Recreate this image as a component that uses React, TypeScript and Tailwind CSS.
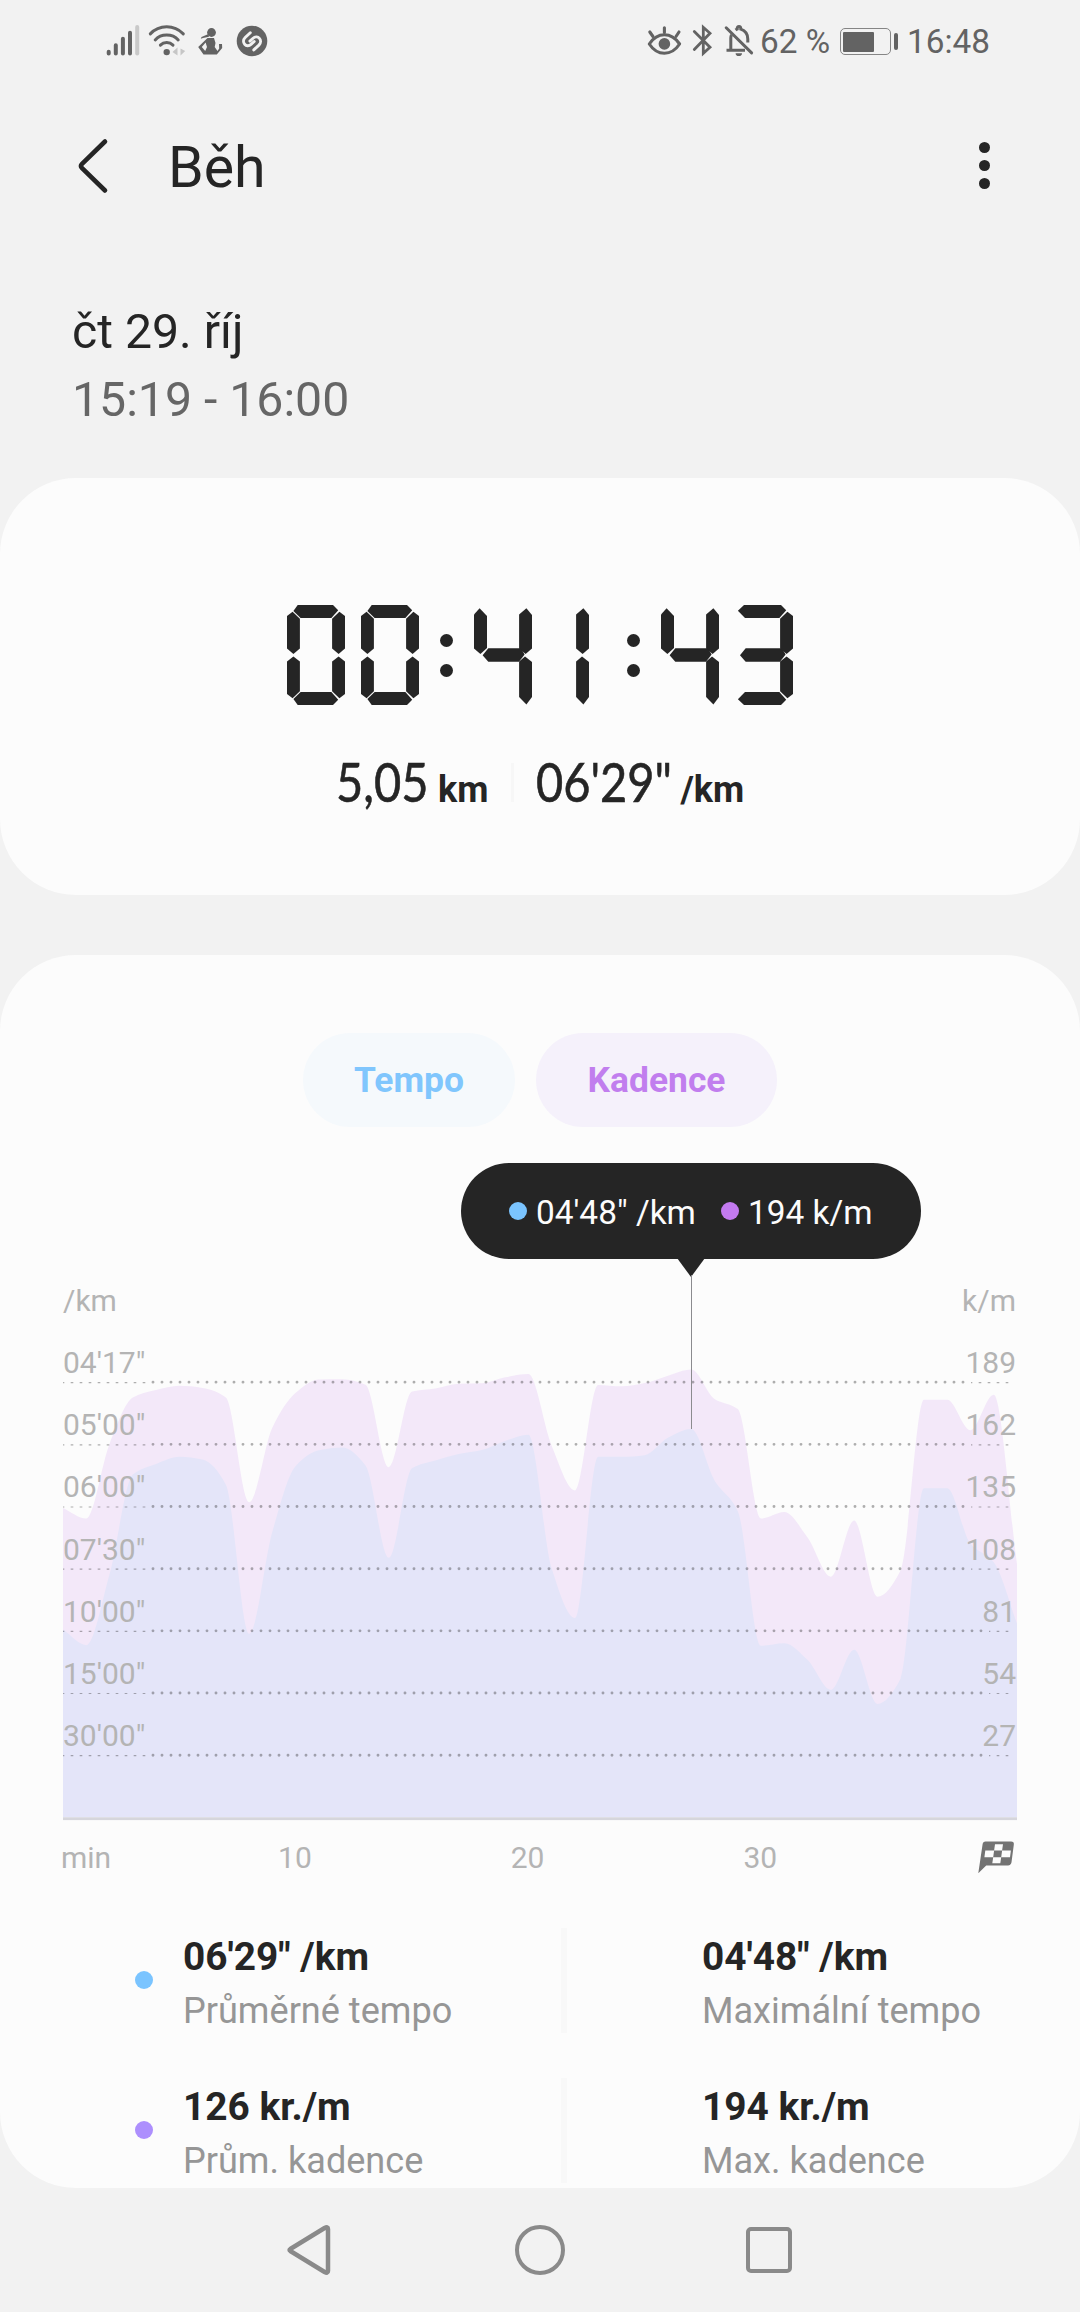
import React from "react";

const CADENCE = [
  134.4, 129.8, 162.2, 182.3, 185.6, 187.4, 186.5, 182.3, 136.9, 169.3, 184.4, 190.2, 190.3, 187.9,
  152.1, 184.9, 186.2, 188.3, 188.5, 191.1, 192.5, 161.4, 142, 187.8, 187.2, 188.6, 191.8, 194.5,
  181.7, 177.3, 129.8, 132.6, 121.5, 104.5, 128.9, 95.8, 107.3, 181.4, 181.4, 168.1, 183.5, 110,
];

const SPEED = [
  6.04, 5.54, 7.82, 11.03, 11.37, 11.6, 11.51, 10.7, 5.91, 9.2, 11.3, 11.81, 11.9, 11.32, 8.35,
  11.23, 11.48, 11.69, 11.82, 12.11, 12.31, 8.01, 6.41, 11.6, 11.6, 11.65, 12.21, 12.49, 10.84,
  9.85, 5.52, 5.6, 5.06, 4.1, 5.39, 3.65, 4.47, 10.59, 10.59, 8.8, 8.21, 6.24,
];

const PLOT_W = 954;
const ROW = 62.17;
const PLOT_H = 8 * ROW;

/** Area under a monotone cubic curve; `unit` is the value of one grid row. */
function areaPath(values: number[], unit: number): string {
  const n = values.length;
  const dx = PLOT_W / (n - 1);
  const ys = values.map((v) => PLOT_H - (v / unit) * ROW);
  const slopes: number[] = [];
  for (let i = 0; i < n - 1; i++) slopes.push((ys[i + 1] - ys[i]) / dx);
  const tangents = ys.map((_, i) => {
    if (i === 0) return slopes[0];
    if (i === n - 1) return slopes[n - 2];
    const a = slopes[i - 1];
    const b = slopes[i];
    return a * b <= 0 ? 0 : (2 * a * b) / (a + b);
  });
  let d = `M0 ${PLOT_H}L0 ${ys[0].toFixed(2)}`;
  for (let i = 0; i < n - 1; i++) {
    const x0 = i * dx;
    const x1 = x0 + dx;
    d += `C${(x0 + dx / 3).toFixed(2)} ${(ys[i] + (tangents[i] * dx) / 3).toFixed(2)} ${(x1 - dx / 3).toFixed(2)} ${(
      ys[i + 1] -
      (tangents[i + 1] * dx) / 3
    ).toFixed(2)} ${x1.toFixed(2)} ${ys[i + 1].toFixed(2)}`;
  }
  return `${d}L${PLOT_W} ${PLOT_H}Z`;
}

const GRID = [
  { pace: "04'17\"", cadence: "189" },
  { pace: "05'00\"", cadence: "162" },
  { pace: "06'00\"", cadence: "135" },
  { pace: "07'30\"", cadence: "108" },
  { pace: "10'00\"", cadence: "81" },
  { pace: "15'00\"", cadence: "54" },
  { pace: "30'00\"", cadence: "27" },
];

function StatusBar() {
  return (
    <div className="flex h-[83px] items-center text-[33.3px] text-[#636363]">
      <svg className="ml-[104px] h-[36px] w-[38px]" viewBox="104 23.5 38 36" fill="none" strokeWidth="4" strokeLinecap="round" stroke="#636363">
        <path d="M108.7 51.2V53M115.8 44.8V53M122.9 38.2V53M130 32.2V53" />
        <path d="M137.2 26.6V53" stroke="#c9c9c9" />
      </svg>
      <svg className="ml-[5px] h-[36px] w-[40px]" viewBox="147 23.5 40 36" fill="none" stroke="#636363" strokeWidth="3" strokeLinecap="round">
        <path d="M150.3 33.4Q157 26.3 166.7 26.3T183.3 33.4" />
        <path d="M155.2 39.4Q159.5 34.6 166.7 34.6T178.2 39.4" />
        <path d="M160.4 44.6Q163 42 166.7 42T173 44.6" />
        <circle cx="166.7" cy="51.6" r="3.2" fill="#636363" stroke="none" />
        <path d="M177.5 47V55L172.5 51.5ZM180.5 48V55L185.2 50.5Z" fill="#c6c6c6" stroke="none" />
      </svg>
      <svg className="ml-[10px] h-[36px] w-[28px]" viewBox="197 23.5 28 36" fill="#636363">
        <circle cx="211.5" cy="32" r="4.4" />
        <path d="M208.5 33.5 201.5 36.5 200.8 38.2 203 37.4 209 36.2Z" />
        <path d="M207.5 37.5H214L215.5 42.5 214.7 46.5 217.5 50.5 219.2 48 219 43.5H222L222.2 47.5 216.8 54H203.5L198.2 46.5ZM205.6 42 201.8 46.4 205.2 50.5 207 46.5Z" fillRule="evenodd" />
      </svg>
      <svg className="ml-[11px] h-[36px] w-[32px]" viewBox="236 23.5 32 36" fill="none">
        <circle cx="252" cy="40.5" r="15.3" fill="#636363" />
        <path d="M250.3 32.2 245.2 37C240.6 41.6 246.5 48 251 43.9L254.2 41" stroke="#f2f2f2" strokeWidth="2.9" strokeLinecap="round" />
        <path d="M253.8 49.4 258.9 44.6C263.5 40 257.6 33.6 253.1 37.7L249.9 40.6" stroke="#f2f2f2" strokeWidth="2.9" strokeLinecap="round" />
      </svg>
      <svg className="ml-[378px] h-[36px] w-[36px]" viewBox="646 23.5 36 36" fill="none" stroke="#636363" strokeWidth="3.1" strokeLinecap="round">
        <path d="M649.3 43.5Q655.5 34.3 664.4 34.3T679.6 43.5Q673.4 52.8 664.4 52.8T649.3 43.5Z" strokeLinejoin="round" />
        <circle cx="664.4" cy="43.4" r="5.8" fill="#636363" stroke="none" />
        <path d="M664.4 27.3V32M649.8 31.5 653 36M679 31.5 676 36" />
      </svg>
      <svg className="ml-[10px] h-[36px] w-[22px]" viewBox="692 23.5 22 36" fill="none" stroke="#636363" strokeWidth="2.8" strokeLinecap="round" strokeLinejoin="miter">
        <path d="M694.3 31 710 46.8 703.3 52.8V26.8L710 32.8 694.3 49" />
      </svg>
      <svg className="ml-[10px] h-[36px] w-[32px]" viewBox="724 23.5 32 36" fill="none" stroke="#636363" strokeWidth="3">
        <path d="M726.2 27.3 751.6 52.4" strokeLinecap="round" />
        <path d="M726.5 49.8H745M730.8 49.5V37.5Q730.8 35.5 731.6 34.5M735.5 29.5Q736.2 29 737.2 28.6 737.2 26 739 26T740.8 28.6Q747.8 31 747.8 38.5V42" />
        <path d="M735.6 52.8H742A3.2 2.8 0 0 1 735.6 52.8Z" fill="#636363" stroke="none" />
      </svg>
      <span className="ml-[4px] w-[78px] whitespace-nowrap">62 %</span>
      <div className="ml-[2px] flex h-[27px] w-[51px] items-center rounded-[5px] border-[1.5px] border-[#858585] pl-[2px]">
        <div className="h-[20px] w-[31px] rounded-[1px] bg-[#636363]" />
      </div>
      <div className="ml-[3px] h-[17px] w-[4px] rounded-[2px] bg-[#636363]" />
      <span className="ml-[9px]">16:48</span>
    </div>
  );
}

function Header() {
  return (
    <header className="flex h-[168px] items-center">
      <svg className="mb-[3px] ml-[72px] h-[60px] w-[40px]" viewBox="0 0 40 60" fill="none" stroke="#252525" strokeWidth="4.6" strokeLinecap="round" strokeLinejoin="round">
        <path d="M33 5.5 9.8 28.2Q8 30 9.8 31.8L33 54.5" />
      </svg>
      <h1 className="ml-[56px] pt-[2px] text-[57.3px] leading-[70px]">Běh</h1>
      <div className="mb-[3px] ml-auto mr-[90px] flex flex-col gap-[7.2px]">
        <i className="size-[11px] rounded-full bg-[#252525]" />
        <i className="size-[11px] rounded-full bg-[#252525]" />
        <i className="size-[11px] rounded-full bg-[#252525]" />
      </div>
    </header>
  );
}

const SEG = {
  top: "[clip-path:polygon(10.7px_0,46px_0,51.2px_5.3px,44.4px_13px,13.6px_13px,6.4px_6px)]",
  topOpen: "[clip-path:polygon(9px_0,46px_0,51.2px_5.3px,44.4px_13px,10px_13px,2.9px_5.8px)]",
  bottom: "[clip-path:polygon(13.6px_87px,44.4px_87px,51.2px_94.7px,46px_100px,10.7px_100px,6.4px_94px)]",
  bottomOpen: "[clip-path:polygon(10px_87px,44.4px_87px,51.2px_94.7px,46px_100px,9px_100px,2.9px_94.2px)]",
  middle: "[clip-path:polygon(14.3px_43.3px,47px_43.3px,50.6px_49.5px,45px_56.7px,14.3px_56.7px,8.6px_50.3px)]",
  middleOpen: "[clip-path:polygon(10.7px_43.3px,47px_43.3px,50.6px_49.5px,45px_56.7px,10.7px_56.7px,5px_50.3px)]",
  upperLeft: "[clip-path:polygon(0_11px,5.6px_6.7px,12.9px_13.8px,12.9px_43.5px,6.4px_49px,0_43.5px)]",
  lowerLeft: "[clip-path:polygon(0_89px,5.6px_93.3px,12.9px_86.2px,12.9px_56.5px,6.4px_51.5px,0_56.5px)]",
  upperRight: "[clip-path:polygon(58px_11px,52.4px_6.7px,45.1px_13.8px,45.1px_43.5px,51.6px_49px,58px_43.5px)]",
  lowerRight: "[clip-path:polygon(58px_89px,52.4px_93.3px,45.1px_86.2px,45.1px_56.5px,51.6px_51.5px,58px_56.5px)]",
  upperLeftFree: "[clip-path:polygon(0_9.5px,5.6px_3.3px,13px_11px,13px_43px,6.4px_49px,0_43.5px)]",
  upperRightFree: "[clip-path:polygon(45.1px_9.5px,52.4px_3.3px,58px_10px,58px_43.5px,51.6px_49px,45.1px_43.5px)]",
  lowerRightFree: "[clip-path:polygon(45.1px_56.5px,51px_51.5px,58px_57px,58px_92px,52.4px_99.5px,45.1px_92px)]",
};

type Segment = keyof typeof SEG;

const DIGITS: Record<string, Segment[]> = {
  "0": ["top", "bottom", "upperLeft", "lowerLeft", "upperRight", "lowerRight"],
  "1": ["upperRightFree", "lowerRightFree"],
  "3": ["topOpen", "middleOpen", "bottomOpen", "upperRight", "lowerRight"],
  "4": ["upperLeftFree", "upperRightFree", "middle", "lowerRightFree"],
};

function Digit({ value, className = "" }: { value: string; className?: string }) {
  return (
    <div className={`grid h-[100px] w-[58px] ${className}`}>
      {DIGITS[value].map((s) => (
        <i key={s} className={`col-start-1 row-start-1 bg-[#252525] ${SEG[s]}`} />
      ))}
    </div>
  );
}

function Colon() {
  return (
    <div className="flex h-[100px] w-[13px] flex-col gap-[17px] pt-[29px]">
      <i className="size-[13px] rounded-full bg-[#252525]" />
      <i className="size-[13px] rounded-full bg-[#252525]" />
    </div>
  );
}

function SummaryCard() {
  return (
    <section className="mt-[44px] h-[417px] rounded-[76px] bg-[#fcfcfc] pt-[127px]">
      <div role="img" aria-label="00:41:43" className="flex pl-[287px]">
        <Digit value="0" />
        <Digit value="0" className="ml-[16px] mr-[21px]" />
        <Colon />
        <Digit value="4" className="ml-[21px]" />
        <Digit value="1" className="-ml-[1px] mr-[38px]" />
        <Colon />
        <Digit value="4" className="ml-[21px]" />
        <Digit value="3" className="ml-[16px]" />
      </div>
      <div className="mt-[41px] flex h-[72px] items-baseline whitespace-nowrap pl-[336px] text-[36px] font-bold leading-[72px]">
        <span className="w-[102px] origin-left scale-x-[0.87] font-['Lato',sans-serif] text-[54px] font-normal [-webkit-text-stroke:0.6px_#252525]">5,05</span>
        <span>km</span>
        <i className="ml-[23px] h-[39px] w-[3px] self-center bg-[#f7f7f7]" />
        <span className="ml-[22px] w-[144px] origin-left scale-x-[0.87] font-['Lato',sans-serif] text-[54px] font-normal [-webkit-text-stroke:0.6px_#252525]">06'29"</span>
        <span>/km</span>
      </div>
    </section>
  );
}

function Tooltip() {
  return (
    <div className="absolute left-[461px] top-[208px] flex h-[96px] w-[460px] items-center whitespace-nowrap rounded-full bg-[#252525] pl-[48px] text-[33.4px] text-[#fcfcfc]">
      <i className="size-[18px] rounded-full bg-[#7ac4ff]" />
      <span className="ml-[9px] w-[184px] pt-[4px]">04'48" /km</span>
      <i className="ml-[1px] size-[18px] rounded-full bg-[#c37af0]" />
      <span className="ml-[9px] pt-[4px]">194 k/m</span>
      <i className="absolute left-[216px] top-[95px] h-[19px] w-[28px] bg-[#252525] [clip-path:polygon(0_0,100%_0,50%_100%)]" />
      <i className="absolute left-[230px] top-[112px] h-[154px] w-px bg-[#8b8b8f]" />
    </div>
  );
}

function Chart() {
  return (
    <div className="mx-[63px] mt-[154px] text-[30px] text-[#b4b4b4]">
      <div className="flex h-[39px] justify-between pr-[1px] leading-[40px]">
        <span>/km</span>
        <span>k/m</span>
      </div>
      <div className="relative h-[501px]">
        <svg className="absolute inset-0 h-[501px] w-[954px]" viewBox="0 0 954 501">
          <path d={areaPath(CADENCE, 27)} fill="#f3e8f9" />
          <path d={areaPath(SPEED, 2)} fill="#e4e5f9" />
          {GRID.map((g, i) => {
            const y = (i + 1) * ROW;
            const wide = g.cadence.length === 3;
            const dots = wide ? 900 : 918;
            return (
              <g key={g.pace} stroke="#252525" strokeOpacity="0.36">
                <path d={`M0 ${y + 0.5}H84M${dots + 8} ${y + 0.5}H946.5`} strokeWidth="1.2" strokeDasharray="2.6 6.4" strokeDashoffset="1.3" />
                <path d={`M90 ${y}H${dots + 1}`} strokeWidth="2.9" strokeLinecap="round" strokeDasharray="0 9" />
              </g>
            );
          })}
          <rect x="0" y="497.3" width="954" height="2.8" fill="#d6d6dc" />
        </svg>
        <div className="relative pr-[1px]">
          {GRID.map((g) => (
            <div key={g.pace} className="flex h-[62.17px] items-end justify-between leading-[38px]">
              <span>{g.pace}</span>
              <span>{g.cadence}</span>
            </div>
          ))}
        </div>
      </div>
      <div className="mt-[17px] flex h-[40px] text-center leading-[40px]">
        <span className="-ml-[2px] w-[117.6px] text-left">min</span>
        <span className="w-[232.7px]">10</span>
        <span className="w-[232.7px]">20</span>
        <span className="w-[232.7px]">30</span>
        <svg className="ml-auto mr-[2px] mt-[2px] h-[34px] w-[38px]" viewBox="977 1840 38 34">
          <path d="M985.5 1841.4H1011Q1014.4 1841.4 1013.8 1844.8L1011.5 1862.3Q1011 1865.4 1008 1865.4H986.2L978.3 1873.2 982.6 1844.2Q983 1841.4 985.5 1841.4Z" fill="#737373" />
          <path d="M995 1844.3H1003L1002.1 1850.6H994.1ZM985.3 1850.6H994.1L993.2 1857.2H984.4ZM1002.1 1850.6H1010.9L1010 1857.2H1001.2ZM993.2 1857.2H1001.2L1000.3 1863.2H992.3Z" fill="#fcfcfc" />
        </svg>
      </div>
    </div>
  );
}

interface StatProps {
  value: string;
  label: string;
}

function Stat({ value, label }: StatProps) {
  return (
    <div className="whitespace-nowrap pt-[2px] leading-[54px]">
      <div className="text-[38.8px] font-bold">{value}</div>
      <div className="-mt-[0.5px] text-[36.1px] text-[#969696]">{label}</div>
    </div>
  );
}

function StatRow({ dot, left, right }: { dot: string; left: StatProps; right: StatProps }) {
  return (
    <div className="flex h-[105px] pl-[135px]">
      <i className={`mt-[43px] size-[18px] rounded-full ${dot}`} />
      <div className="ml-[30px] w-[378px]">
        <Stat {...left} />
      </div>
      <i className="mr-[135px] h-[105px] w-[6px] bg-[#f8f8f8]" />
      <Stat {...right} />
    </div>
  );
}

function NavBar() {
  return (
    <nav className="flex h-[124px] items-center pl-[284px]">
      <svg className="h-[56px] w-[50px]" viewBox="0 0 50 56" fill="none" stroke="#8a8a8a" strokeWidth="4.5" strokeLinejoin="round">
        <path d="M6.3 27Q4.8 28 6.3 29L40.6 50Q44 51.8 44 49V7Q44 4.2 40.6 6Z" />
      </svg>
      <i className="ml-[181px] size-[50px] rounded-full border-[4.5px] border-[#8a8a8a]" />
      <i className="ml-[181px] size-[46px] rounded-[5px] border-[4.5px] border-[#8a8a8a]" />
    </nav>
  );
}

export default function App() {
  return (
    <div className="h-[2312px] w-[1080px] overflow-hidden bg-[#f2f2f2] font-['Roboto',sans-serif] text-[#252525]">
      <StatusBar />
      <Header />
      <div className="ml-[72px] mt-[47px] text-[48.2px] leading-[68px]">
        <div>čt 29. říj</div>
        <div className="text-[#666666]">15:19 - 16:00</div>
      </div>
      <SummaryCard />
      <section className="relative mt-[60px] h-[1233px] rounded-[76px] bg-[#fcfcfc] pt-[78px]">
        <div className="flex gap-[21px] pl-[303px] text-[35.4px] font-bold">
          <button className="h-[94px] w-[212px] rounded-full bg-[#f5f9fc] pt-[2px] text-[#80c6fd]">Tempo</button>
          <button className="h-[94px] w-[241px] rounded-full bg-[#f5f1fb] pt-[2px] text-[#c17eee]">Kadence</button>
        </div>
        <Chart />
        <div className="mt-[50px] flex flex-col gap-[45px]">
          <StatRow
            dot="bg-[#7ac4ff]"
            left={{ value: "06'29\" /km", label: "Průměrné tempo" }}
            right={{ value: "04'48\" /km", label: "Maximální tempo" }}
          />
          <StatRow
            dot="bg-[#ad8ffd]"
            left={{ value: "126 kr./m", label: "Prům. kadence" }}
            right={{ value: "194 kr./m", label: "Max. kadence" }}
          />
        </div>
        <Tooltip />
      </section>
      <NavBar />
    </div>
  );
}
